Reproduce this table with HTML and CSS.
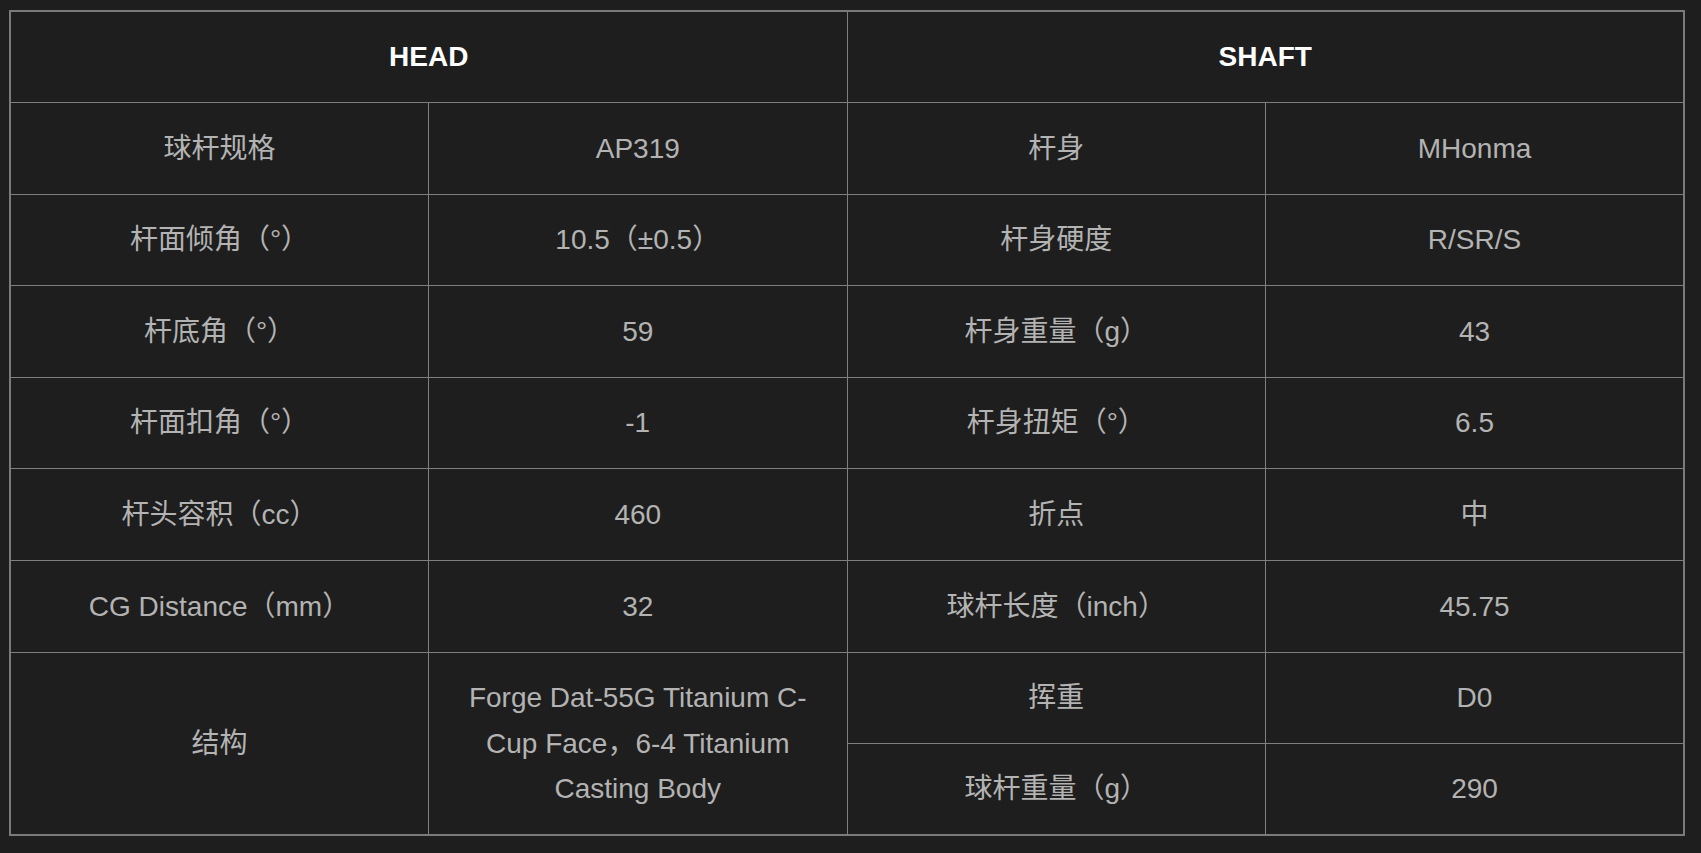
FILE: index.html
```html
<!DOCTYPE html>
<html lang="zh-CN">
<head>
<meta charset="utf-8">
<title>Specs</title>
<link rel="stylesheet" href="styles.css">
</head>
<body>
<table class="spec">
  <colgroup><col class="c"><col class="c"><col class="c"><col class="c"></colgroup>
  <thead>
    <tr><th colspan="2">HEAD</th><th colspan="2">SHAFT</th></tr>
  </thead>
  <tbody>
    <tr><td>球杆规格</td><td>AP319</td><td>杆身</td><td>MHonma</td></tr>
    <tr><td>杆面倾角（°）</td><td>10.5（±0.5）</td><td>杆身硬度</td><td>R/SR/S</td></tr>
    <tr><td>杆底角（°）</td><td>59</td><td>杆身重量（g）</td><td>43</td></tr>
    <tr><td>杆面扣角（°）</td><td>-1</td><td>杆身扭矩（°）</td><td>6.5</td></tr>
    <tr><td>杆头容积（cc）</td><td>460</td><td>折点</td><td>中</td></tr>
    <tr><td>CG Distance（mm）</td><td>32</td><td>球杆长度（inch）</td><td>45.75</td></tr>
    <tr><td rowspan="2">结构</td><td rowspan="2" class="multi">Forge Dat-55G Titanium C-Cup Face，6-4 Titanium Casting Body</td><td>挥重</td><td>D0</td></tr>
    <tr><td>球杆重量（g）</td><td>290</td></tr>
  </tbody>
</table>
</body>
</html>
```
FILE: styles.css
```css
html, body {
  background: #1e1e1e;
}
body {
  margin: 10px 16px 0 9px;
  font-family: "Liberation Sans", "Noto Sans CJK SC", sans-serif;
}
.spec {
  width: 1676px;
  border-collapse: collapse;
  border: 2px solid #7a7a7a;
  table-layout: fixed;
}
.spec tr {
  height: 91.6px;
}
.spec th,
.spec td {
  border: 1px solid #7f7f7f;
  text-align: center;
  vertical-align: middle;
  padding: 0 30px;
  font-size: 28px;
  line-height: 1.63;
}
.spec th {
  color: #ffffff;
  font-weight: bold;
}
.spec td {
  color: #b3b3b3;
}
.spec td.multi {
  line-height: 45.6px;
}
```
